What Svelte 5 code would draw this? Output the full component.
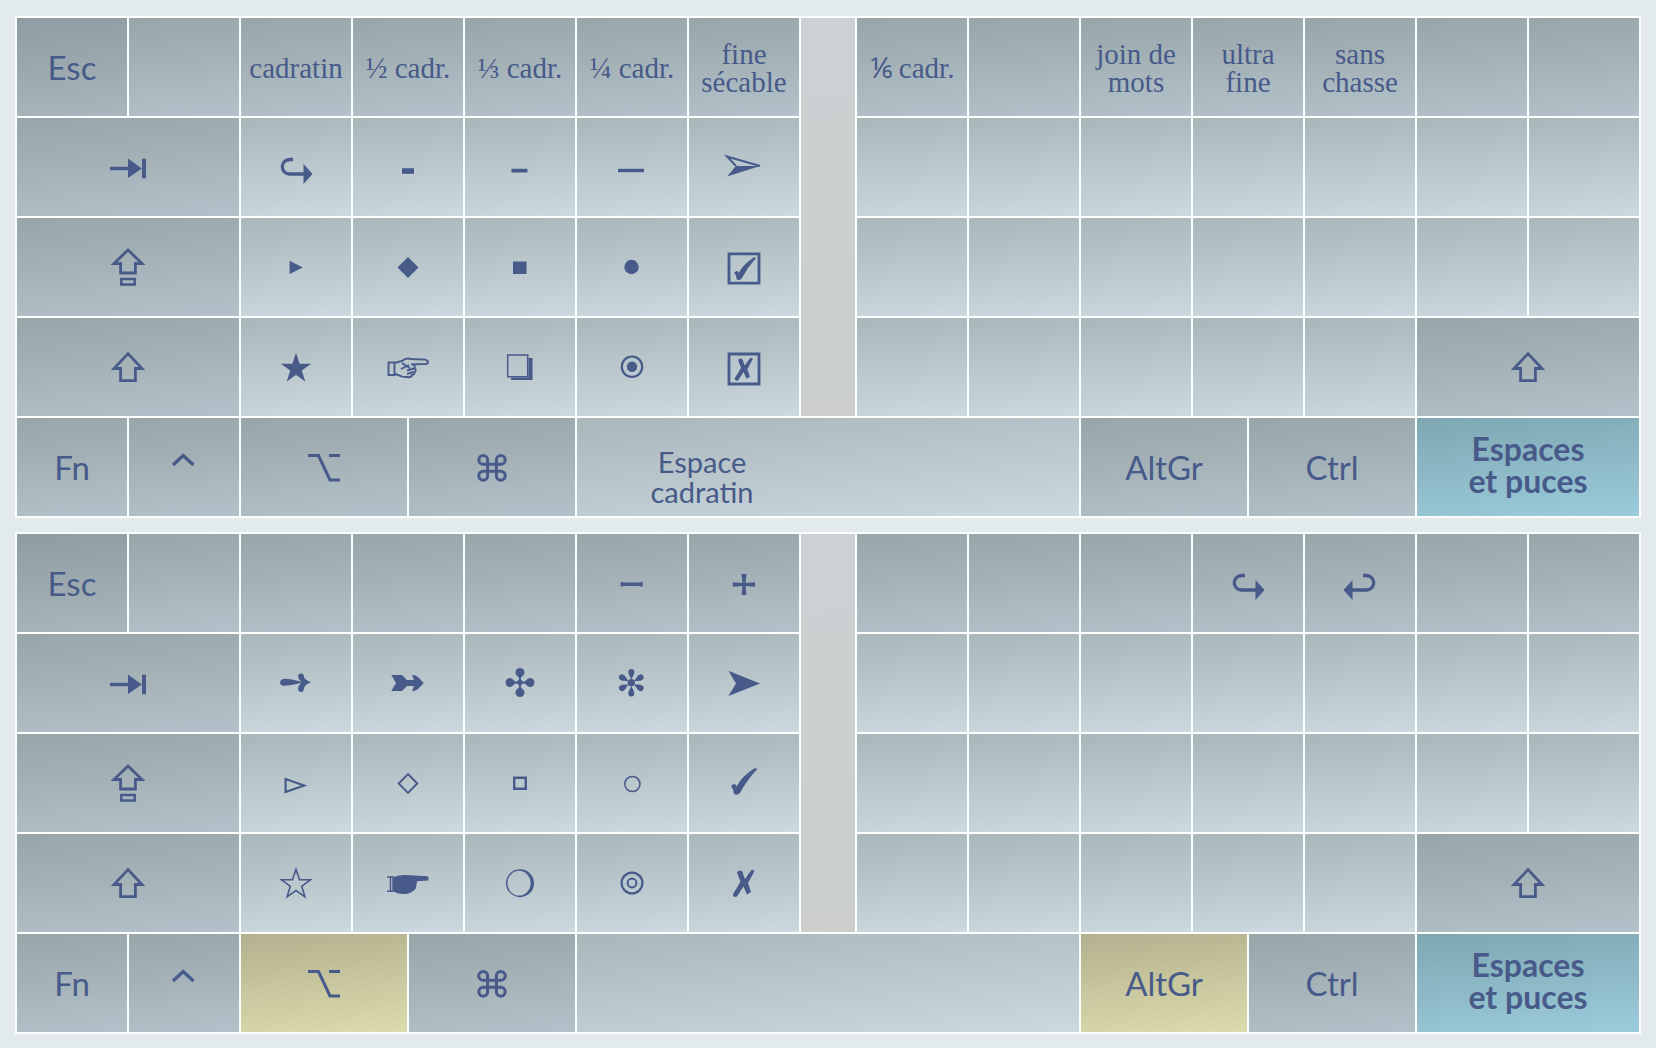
<script>
  const INK = 'currentColor';
  const line = (d, w = 3) => `<path d="${d}" fill="none" stroke="${INK}" stroke-width="${w}"/>`;
  const solid = (d, extra = '') => `<path d="${d}" ${extra}/>`;

  function star(cx, cy, R, r) {
    const pts = [];
    for (let i = 0; i < 10; i++) {
      const a = (-90 + i * 36) * Math.PI / 180;
      const q = i % 2 ? r : R;
      pts.push((cx + q * Math.cos(a)).toFixed(2) + ',' + (cy + q * Math.sin(a)).toFixed(2));
    }
    return 'M' + pts.join('L') + 'Z';
  }
  const rot = (n, inner) => Array.from({ length: n }, (_, i) =>
    `<g transform="rotate(${i * 360 / n})">${inner}</g>`).join('');

  const CHECK = 'M-13,3 Q-9,-1 -7.5,3.5 Q-2,-7 11,-15 L13.3,-14 Q3,-3 -4,10 Q-7,13 -10,11 Q-10,7 -13,3Z';
  const CROSS = 'M-7,-11 Q-3.5,-14 -1.5,-11 Q-.5,-7 1,-4 Q4,-9 8,-13.5 L10.5,-12 Q8,-7 4,0 Q5.5,4.5 7,9 L3,11.5 Q1,7 -.5,3.5 Q-4,9 -7,13.5 Q-11,15 -11,11 Q-7,5 -3.5,-1.5 Q-5.5,-6 -7,-11Z';
  const HOOK = line('M-3,-7.5 H-6.5 A7.25,7.25 0 0 0 -6.5,7 H8', 3.3) + solid('M7.5,-3 L16.5,7 L7.5,17Z');

  const ICONS = {
    tab: line('M-18,1.5 H2', 3.4) + solid('M0,-8.5 L13.8,1.5 L0,11Z') + solid('M14,-8.3 H18 V11.3 H14Z'),
    lock: line('M0,-17 L-14,-3.5 H-7.4 V6 H7.4 V-3.5 H14Z', 2.8) + line('M-6.8,12 H6.8 V17.6 H-6.8Z', 2.5),
    shift: line('M0,-13.4 L-14,1.5 H-7.4 V13.6 H7.4 V1.5 H14Z', 2.8),
    hook: HOOK,
    ret: `<g transform="scale(-1,1)">${HOOK}</g>`,
    dash1: solid('M-6,1.2 H6 V6.8 H-6Z'),
    dash2: solid('M-8.5,1.8 H7.5 V5.5 H-8.5Z'),
    dash3: solid('M-14,1.8 H12 V5.2 H-14Z'),
    thinhead: solid('M16,-1 L-8,-1 L-17,9.5Z') + line('M16,-1 L-17,-10.5 L-8,-1', 2),
    tri: solid('M-6.4,-6.3 L6.8,.4 L-6.4,7Z'),
    dia: solid('M0,-10 L10.5,.5 L0,11 L-10.5,.5Z'),
    sq: solid('M-7,-5.5 H6.5 V7 H-7Z'),
    dot: '<circle cx="-.5" cy="0" r="7.2"/>',
    cbox: line('M-15,-13.2 H15 V16.2 H-15Z', 2.8) + `<g transform="translate(1,3) scale(.83,.85)">${solid(CHECK)}</g>`,
    xbox: line('M-15,-13 H15 V17 H-15Z', 2.8) + `<g transform="translate(0,2) scale(.85)">${solid(CROSS)}</g>`,
    star: solid(star(0, 1.7, 16, 6.1)),
    hand: line('M-19.5,-4.5 H-13.5 V8 H-19.5Z M-13.5,-4 L-6,-6 Q-2,-9.5 3,-8 L17.5,-7.4 Q20,-6.5 20,-4.8 Q20,-3.2 17.5,-3 L3,-2.6 Q8,-2 6.5,1 Q9,3.5 6.5,5 Q7,8 4,8 Q3.5,10.8 -1,10 L-6,9.6 L-13.5,6.5 M-6,-4 L2,1.2 M-7,2 L1,-2 M-1,3.5 L6,1.5 M-1,7 L5.5,5', 1.9),
    shadow: line('M-12.3,-12 H7.7 V9.8 H-12.3Z', 1.5) + solid('M-9,10.5 H8.5 V-9 H12.5 V13 H-9Z'),
    target: `<circle cx="0" cy="-.3" r="10.2" fill="none" stroke="${INK}" stroke-width="2.2"/><circle cx="0" cy="-.3" r="5.2"/>`,
    chev: line('M-11,-2 L-.8,-11.5 L9.5,-2', 3.4),
    opt: line('M-16,-11.5 H-5.5 L6,13 H16 M5,-11.5 H16', 3),
    cmd: `<g transform="translate(0,.8) scale(.88)">${line('M-5,-4 V-9 A5,5 0 1 0 -10,-4 H10 A5,5 0 1 0 5,-9 V9 A5,5 0 1 0 10,4 H-10 A5,5 0 1 0 -5,9 V-4', 3.5)}</g>`,
    minus: solid('M-11.3,-1.3 L-8,-.4 H7 L10.7,-1.3 V3.8 L7,2.9 H-8 L-11.3,3.8Z'),
    plus: solid('M-2.5,-9 H2.5 L1.5,0 L11,-.8 V3.8 L1.5,3 L2.5,12 H-2.5 L-1.5,3 L-11.3,3.8 V-.8 L-1.5,0Z'),
    arrow1: solid('M15,-.7 Q9,-3 8,-6 Q8,-9.5 5,-9.5 Q2,-9.5 2,-6 Q3,-3 6,-.7 Q3,1.6 2,5 Q2,9 5,9 Q8,9 8,5 Q9,1.6 15,-.7Z') + solid('M8,-.7 L-4,-3.5 Q-10,-4.5 -13,-4 Q-16,-3 -16,-.7 Q-16,2 -13,2.8 Q-10,3 -4,2Z'),
    arrow2: solid('M-16.7,-8 H-6 L-1,-3 H6 L4,-8 Q7,-8.5 10,-6 L15.7,0 L10,6 Q7,8.5 4,8 L6,3 H-1 L-6,8 H-16.7 L-12,0Z'),
    quad: `<g transform="translate(0,-.5)">${rot(4, solid('M0,-3 C-1,-6 -4.5,-7 -4.5,-10 A4.5,4.5 0 0 1 4.5,-10 C4.5,-7 1,-6 0,-3Z'))}<path d="M-6,-1 H6 V1 H-6Z M-1,-6 H1 V6 H-1Z"/><circle r="2.8"/></g>`,
    flor: `<g transform="translate(-.7,-.3)">${rot(6, solid('M0,-3 C-1,-6 -3,-8 -3,-10.8 A3,3 0 0 1 3,-10.8 C3,-8 1,-6 0,-3Z'))}<circle r="3.6"/></g>`,
    head: solid('M-15.6,-12.3 L16,.5 L-15.6,13 L-8,.5Z'),
    otri: line('M-10.4,-4 L8,2.5 L-10.4,9Z', 2.2),
    odia: line('M0,-9 L9.3,.5 L0,10 L-9.3,.5Z', 1.9),
    osq: line('M-5.8,-5.2 H5.8 V5.8 H-5.8Z', 2.4),
    ocir: `<circle cx=".4" cy="1" r="7.6" fill="none" stroke="${INK}" stroke-width="1.5"/>`,
    check: solid(CHECK),
    ostar: `<path d="${star(0, 1.5, 15.2, 6)}" fill="none" stroke="${INK}" stroke-width="1.6"/>`,
    shand: line('M-21,-6 H-13.5 M-21,8.3 H-13.5 M-17.5,-6 V8.3', 1.5) + solid('M-15.7,-5 Q-10,-8.5 -3,-8 L19.5,-6.8 Q21.5,-5 20,-2.5 L9,-1.7 Q8.5,3 7.5,6 Q3,11 -4,11 Q-12,11.2 -15.7,7Z'),
    crescent: '<path fill-rule="evenodd" d="M0,-13.8 A14,14 0 1 1 0,14.2 A14,14 0 1 1 0,-13.8Z M-1,-12.2 A11.6,12.4 0 1 0 -1,12.6 A11.6,12.4 0 1 0 -1,-12.2Z"/>',
    ring: `<circle cx="0" cy="0" r="10.4" fill="none" stroke="${INK}" stroke-width="2.2"/><circle cx="0" cy="0" r="4.4" fill="none" stroke="${INK}" stroke-width="2"/>`,
    xmark: solid(CROSS),
  };

  const k = (kind, span, o = {}) => ({ kind, span, ...o });
  const esc = k('esc', 2, { text: 'Esc' });
  const m = (o = {}) => k('mod', 2, o);
  const l = (o = {}) => k('lit', 2, o);
  const serif = (...lines) => m({ serif: lines });
  const ic = (name) => l({ icon: name });
  const lights = (n) => Array.from({ length: n }, () => l());
  const wide = (icon) => k('mod', 4, { icon });
  const emptyTop = (n) => Array.from({ length: n }, () => m());

  const bottom = (space, alt) => [
    k('mod', 2, { text: 'Fn' }),
    k('mod', 2, { icon: 'chev' }),
    k(alt, 3, { icon: 'opt' }),
    k('mod', 3, { icon: 'cmd' }),
    k('lit', 9, { space }),
    k(alt, 3, { text: 'AltGr' }),
    k('mod', 3, { text: 'Ctrl' }),
    k('blue', 4, { strong: ['Espaces', 'et puces'] }),
  ];

  const boards = [
    [
      esc, m(), serif('cadratin'), serif('½ cadr.'), serif('⅓ cadr.'), serif('¼ cadr.'), serif('fine', 'sécable'),
      serif('⅙ cadr.'), m(), serif('join de', 'mots'), serif('ultra', 'fine'), serif('sans', 'chasse'), m(), m(),
      wide('tab'), ic('hook'), ic('dash1'), ic('dash2'), ic('dash3'), ic('thinhead'), ...lights(7),
      wide('lock'), ic('tri'), ic('dia'), ic('sq'), ic('dot'), ic('cbox'), ...lights(7),
      wide('shift'), ic('star'), ic('hand'), ic('shadow'), ic('target'), ic('xbox'), ...lights(5), wide('shift'),
      ...bottom(['Espace', 'cadratin'], 'mod'),
    ],
    [
      esc, ...emptyTop(4), m({ icon: 'minus' }), m({ icon: 'plus' }),
      ...emptyTop(3), m({ icon: 'hook' }), m({ icon: 'ret' }), ...emptyTop(2),
      wide('tab'), ic('arrow1'), ic('arrow2'), ic('quad'), ic('flor'), ic('head'), ...lights(7),
      wide('lock'), ic('otri'), ic('odia'), ic('osq'), ic('ocir'), ic('check'), ...lights(7),
      wide('shift'), ic('ostar'), ic('shand'), ic('crescent'), ic('ring'), ic('xmark'), ...lights(5), wide('shift'),
      ...bottom(null, 'yel'),
    ],
  ];
</script>

<main class="page">
  {#each boards as keys}
    <section class="board">
      <div class="spacer"></div>
      {#each keys as key}
        <div class="key {key.kind} s{key.span}">
          {#if key.icon}
            <svg class="ic" viewBox="-30 -30 60 60" width="60" height="60" aria-hidden="true">{@html ICONS[key.icon]}</svg>
          {:else if key.text}
            <span class="label">{key.text}</span>
          {:else if key.serif}
            <span class="serif">{#each key.serif as t}<span>{t}</span>{/each}</span>
          {:else if key.strong}
            <span class="strong">{#each key.strong as t}<span>{t}</span>{/each}</span>
          {:else if key.space}
            <span class="space">{#each key.space as t}<span>{t}</span>{/each}</span>
          {/if}
        </div>
      {/each}
    </section>
  {/each}
</main>

<style>
  :global(body) {
    margin: 0;
    background: #e3eaec;
  }
  .page {
    display: flex;
    flex-direction: column;
    gap: 14px;
    box-sizing: border-box;
    width: 1656px;
    height: 1048px;
    padding: 16px 15px 14px;
    overflow: hidden;
    color: #475a89;
  }
  .board {
    display: grid;
    grid-template-columns: repeat(29, 54px);
    grid-template-rows: repeat(5, 98px);
    gap: 2px;
    padding: 2px;
    background: #fdfefe;
  }
  .spacer {
    grid-column: 15;
    grid-row: 1 / span 4;
    background: linear-gradient(176deg, #ccd1d3, #cbcecd);
  }
  .key {
    display: flex;
    align-items: center;
    justify-content: center;
    text-align: center;
    font-family: Lato, "Open Sans", sans-serif;
  }
  .s2 { grid-column: span 2; }
  .s3 { grid-column: span 3; }
  .s4 { grid-column: span 4; }
  .s9 { grid-column: span 9; justify-content: flex-start; }
  .esc { background: linear-gradient(174deg, #8f9ca1, #a8b7bd); }
  .mod { background: linear-gradient(174deg, #98a5a9, #b3c2ca); }
  .lit { background: linear-gradient(174deg, #a9b6ba, #cbd9e0); }
  .blue { background: linear-gradient(174deg, #7ea7b1, #9ccbdc); }
  .yel { background: linear-gradient(174deg, #b4b18f, #dbdbac); }
  .ic {
    display: block;
    flex: none;
    fill: currentColor;
    overflow: visible;
  }
  .label {
    font-size: 33px;
    line-height: 1;
  }
  .serif, .strong, .space {
    display: flex;
    flex-direction: column;
    align-items: center;
  }
  .serif {
    padding-top: 1px;
    font-family: "Liberation Serif", serif;
    font-size: 29px;
    line-height: 28px;
  }
  .strong {
    padding-bottom: 5px;
    font-size: 32px;
    font-weight: 700;
    line-height: 32px;
  }
  .space {
    width: 250px;
    padding-top: 20px;
    font-size: 29px;
    line-height: 30px;
  }
</style>
